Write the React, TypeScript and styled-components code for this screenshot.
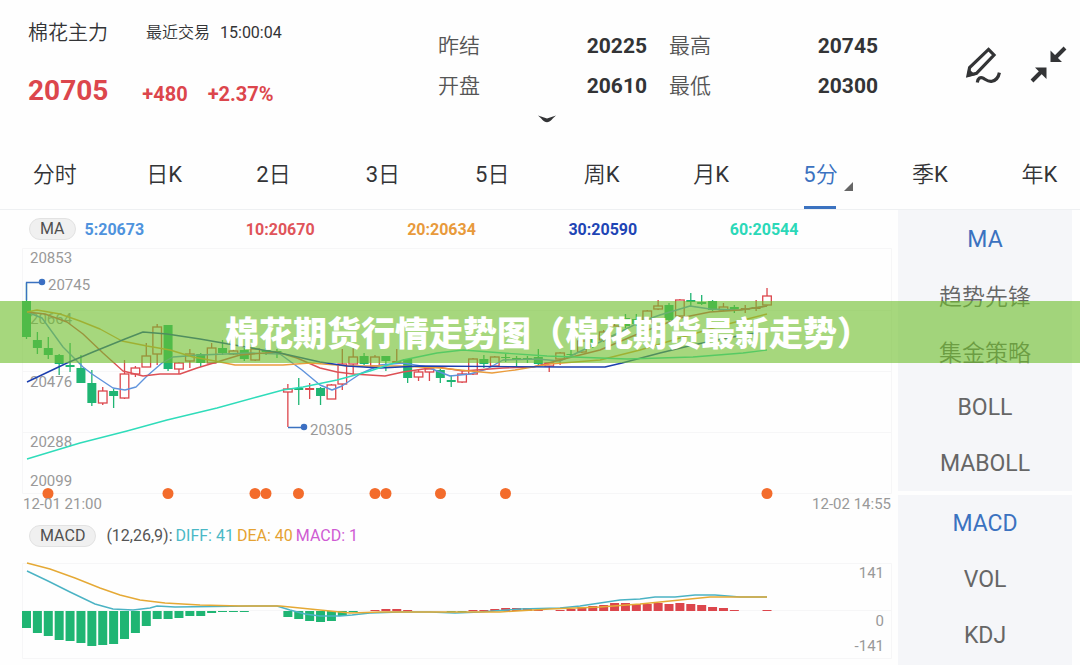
import React from "react";
import styled, { createGlobalStyle } from "styled-components";

const UP = "#dc464c";
const DOWN = "#1fb573";
const INK = "#333436";
const MUTED = "#999999";
const ACCENT = "#3b72c0";

const GlobalStyle = createGlobalStyle`
  *, *::before, *::after { box-sizing: border-box; }
  body {
    margin: 0;
    background: #fefefe;
    color: ${INK};
    font-family: Roboto, "Noto Sans CJK SC DemiLight", "Noto Sans CJK SC", sans-serif;
    overflow-x: hidden;
  }
  button {
    font: inherit;
    color: inherit;
    background: none;
    border: 0;
    padding: 0;
    cursor: pointer;
  }
`;

const Page = styled.div`
  position: relative;
  overflow: hidden;
`;

const Header = styled.header`
  display: grid;
  grid-template-columns: 438fr 440fr 202fr;
  height: 106px;
`;

const Quote = styled.section`
  display: flex;
  flex-direction: column;
  gap: 22px;
  padding: 18px 0 0 28px;
`;

const QuoteLine = styled.div<{ $gap: number; $height: number }>`
  display: flex;
  align-items: center;
  gap: ${(p) => p.$gap}px;
  line-height: ${(p) => p.$height}px;
  white-space: nowrap;
`;

const Name = styled.h1`
  margin: 0 28px 0 0;
  font-size: 20px;
  font-weight: 400;
`;

const Meta = styled.span`
  font-size: 16px;
`;

const Price = styled.strong`
  margin-right: 14px;
  font-size: 28px;
  font-weight: 700;
  color: ${UP};
`;

const Change = styled.strong`
  padding-top: 6px;
  font-size: 20px;
  font-weight: 700;
  color: ${UP};
`;

const Stats = styled.dl`
  display: grid;
  grid-template-columns: 1fr 1fr;
  grid-auto-rows: 40px;
  column-gap: 22px;
  margin: 0;
  padding-top: 26px;
`;

const Stat = styled.div`
  display: flex;
  justify-content: space-between;
  align-items: baseline;
  font-size: 21px;
  line-height: 40px;

  dt { font-weight: 300; color: #555; }
  dd { margin: 0; font-weight: 700; }
`;

const Tools = styled.div`
  display: flex;
  justify-content: flex-end;
  align-items: flex-start;
  gap: 28px;
  padding: 45px 13px 0 0;

  svg { display: block; }
`;

const ExpandRow = styled.div`
  display: flex;
  justify-content: center;
  height: 33px;
  padding: 9px 0 0 14px;

  svg { display: block; }
`;

const ExpandButton = styled.button`
  align-self: flex-start;
`;

const Tabs = styled.nav`
  display: grid;
  grid-template-columns: repeat(10, 1fr);
  height: 71px;
  margin-right: -14px;
  border-bottom: 1px solid #eef0f2;
`;

const Tab = styled.button<{ $active?: boolean }>`
  position: relative;
  padding-bottom: 4px;
  font-size: 22px;
  color: ${(p) => (p.$active ? ACCENT : INK)};

  &::after {
    content: "";
    display: ${(p) => (p.$active ? "block" : "none")};
    position: absolute;
    left: 50%;
    bottom: 0;
    width: 32px;
    height: 3px;
    margin-left: -16px;
    background: ${ACCENT};
  }
`;

const Corner = styled.svg`
  position: absolute;
  right: 22px;
  bottom: 18px;
`;

const Main = styled.main`
  display: grid;
  grid-template-columns: 1fr 174px;
  padding-right: 8px;
`;

const Charts = styled.section`
  min-width: 0;
`;

const Legend = styled.div<{ $height: number }>`
  display: flex;
  align-items: center;
  height: ${(p) => p.$height}px;
  padding-left: 29px;
  font-size: 16px;
  white-space: nowrap;
`;

const Pill = styled.button`
  height: 22px;
  padding: 0 10px;
  border: 1px solid #e2e2e2;
  border-radius: 11px;
  background: #f0f0f0;
  color: #505050;
  font-size: 16px;
  line-height: 20px;
`;

const Averages = styled.div`
  display: grid;
  grid-template-columns: repeat(5, 1fr);
  flex: 1;
  padding: 0 7px 0 9px;
`;

const Average = styled.strong<{ $color: string }>`
  color: ${(p) => p.$color};
  font-weight: 700;
`;

const Readings = styled.div`
  display: flex;
  gap: 3px;
  padding-left: 10px;
`;

const Reading = styled.span<{ $color: string }>`
  color: ${(p) => p.$color};
`;

const Plot = styled.svg`
  display: block;
  width: 100%;
  height: auto;
`;

const AxisText = styled.text`
  fill: ${MUTED};
  font-size: 15px;
`;

const Sidebar = styled.aside`
  display: flex;
  flex-direction: column;
  gap: 4px;
`;

const Panel = styled.div`
  display: flex;
  flex-direction: column;
  padding-top: 1px;
  background: #f5f6f9;

  &:last-child { flex: 1; padding-top: 0; }
`;

const Indicator = styled.button<{ $active?: boolean }>`
  height: 56px;
  font-size: 23px;
  color: ${(p) => (p.$active ? ACCENT : "#666")};
`;

const Banner = styled.div`
  position: absolute;
  top: 301px;
  left: 0;
  right: 0;
  display: flex;
  justify-content: center;
  align-items: center;
  height: 62px;
  padding-left: 16px;
  background: rgba(111, 190, 45, 0.62);
  color: #fff;
  font-family: "Noto Sans CJK SC", sans-serif;
  font-size: 34px;
  font-weight: 900;
  line-height: 62px;
  white-space: nowrap;
`;

/* Horizontal centre of the bar with the given index. */
const barX = (i: number) => 26.5 + i * 10.89;

type Candle = [up: 0 | 1, high: number, open: number, close: number, low: number];

const candles: Candle[] = [
  [0, 283, 301, 337, 339], [0, 332, 340, 348, 354], [0, 337, 348, 355, 359],
  [0, 354, 355, 364, 375], [0, 343, 365, 367, 372], [0, 355, 368, 383, 383],
  [0, 370, 383, 403, 406], [1, 387, 391, 403, 405], [0, 389, 391, 396, 408],
  [1, 360, 374, 398, 399], [1, 366, 368, 374, 377], [1, 343, 356, 367, 367],
  [1, 324, 327, 354, 365], [0, 325, 325, 369, 371], [1, 362, 363, 369, 374],
  [1, 349, 354, 361, 368], [0, 353, 354, 363, 367], [1, 343, 348, 363, 363],
  [0, 340, 348, 353, 355], [1, 349, 351, 354, 355], [0, 348, 350, 359, 361],
  [1, 348, 349, 360, 361], [0, 348, 350, 352, 355], [0, 349, 351, 352, 358],
  [1, 384, 389, 392, 427], [0, 378, 388, 390, 405], [1, 383, 388, 390, 399],
  [0, 387, 388, 396, 405], [1, 384, 385, 399, 399], [1, 349, 364, 384, 390],
  [1, 348, 357, 364, 374], [0, 353, 356, 364, 365], [1, 355, 357, 366, 366],
  [0, 356, 356, 361, 371], [1, 349, 361, 363, 364], [0, 359, 359, 378, 383],
  [1, 370, 372, 377, 381], [1, 367, 369, 372, 381], [0, 369, 370, 378, 383],
  [0, 375, 380, 382, 387], [1, 371, 374, 382, 383], [1, 358, 359, 374, 375],
  [0, 355, 359, 364, 368], [1, 356, 357, 366, 366], [0, 354, 357, 358, 362],
  [0, 356, 358, 360, 367], [0, 356, 358, 359, 363], [0, 349, 357, 364, 365],
  [1, 362, 363, 366, 372], [1, 352, 353, 359, 365], [0, 350, 354, 355, 358],
  [1, 338, 341, 352, 353], [0, 336, 338, 346, 348], [1, 330, 332, 340, 342],
  [1, 322, 326, 336, 338], [0, 314, 318, 326, 328], [0, 314, 319, 324, 326],
  [1, 310, 311, 322, 323], [1, 300, 306, 309, 310], [0, 303, 305, 320, 321],
  [1, 299, 300, 316, 317], [0, 293, 300, 302, 307], [0, 295, 302, 304, 305],
  [0, 300, 301, 310, 311], [1, 303, 307, 310, 311], [0, 305, 307, 309, 313],
  [1, 305, 308, 310, 313], [1, 300, 307, 309, 311], [1, 288, 296, 305, 306],
];

const averageLines: { color: string; points: string }[] = [
  {
    color: "#5f93dc",
    points:
      "27,312 42,318 63,347 83,367 92,374 113,388 125,390 136,387 147,376 162,363 173,357 200,355 250,353 280,354 302,370 320,385 332,390 342,386 360,374 380,365 403,363 427,367 450,376 470,374 487,369 503,360 537,359 560,361 600,342 640,322 660,315 690,306 710,309 740,310 767,306",
  },
  {
    color: "#dd5055",
    points:
      "27,312 45,314 67,322 83,334 103,353 123,371 143,376 160,374 180,374 197,368 217,362 240,355 277,352 297,358 320,368 337,372 353,374 385,376 403,372 437,367 463,371 503,368 533,367 560,360 600,350 640,333 680,318 710,312 740,310 767,306",
  },
  {
    color: "#ea9c3c",
    points:
      "27,312 37,310 60,314 80,321 100,329 122,341 147,346 170,350 193,357 215,361 235,365 283,365 310,363 350,366 400,366 440,368 470,371 492,373 515,370 550,364 600,360 640,350 680,338 720,326 767,314",
  },
  {
    color: "#1c3fae",
    points:
      "27,382 67,363 93,352 125,339 143,332 167,334 200,339 240,346 280,353 320,362 347,366 380,368 420,366 560,367 605,367 622,363 660,353 693,345 727,338 767,331",
  },
  {
    color: "#2fdcba",
    points:
      "27,459 80,443 127,431 167,420 217,408 257,397 283,390 303,387 337,380 370,371 403,360 437,353 463,350 503,353 547,356 627,359 693,357 743,353 767,350",
  },
];

const priceLabels: [string, number][] = [
  ["20853", 263], ["20664", 324], ["20476", 387], ["20288", 447], ["20099", 486],
];

const eventMarks = [48, 168, 255, 266, 298.5, 375, 386, 440.5, 505.5, 767];

const ZERO = 611;
/* Signed bar lengths: positive bars rise above the zero line. */
const histogram = [
  -17, -22, -25, -29, -30, -32, -35, -34, -33, -28, -22, -15, -8, -8, -7, -5, -5,
  -2, -1, -1, -1, 0, 0, 0, -6, -8, -10, -11, -10, -5, -1, 0, 1, 2, 2, 1, 0, 0, 0,
  -1, -1, 1, 1, 2, 3, 3, 3, 1, 0, 1, 2, 4, 5, 6, 8, 8, 7, 7, 8, 7, 8, 7, 6, 4, 3,
  1, 0, 0, 1,
];

const diffLine =
  "27,571 48,581 70,592 95,604 113,609 133,610 150,608 157,606 175,607 250,606 277,606 290,610 305,614 320,616 340,616 352,615 370,613 400,612 430,612 455,613 480,612 520,609 560,608 580,606 600,603 620,600 640,599 655,597 675,597 695,595 715,595 740,597 767,597";
const deaLine =
  "27,563 50,569 75,578 100,588 120,595 140,600 165,603 200,605 240,606 280,606 300,608 330,611 350,613 380,612 420,612 455,612 500,612 550,609 600,607 640,604 680,600 710,597 767,597";

function CandleMark({ candle, x }: { candle: Candle; x: number }) {
  const [up, high, top, bottom, low] = candle;
  const color = up ? UP : DOWN;
  const thin = bottom - top < 3;
  return (
    <g stroke={color} strokeWidth={1.3} fill={up && !thin ? "none" : color}>
      <path d={`M${x} ${high}V${top}M${x} ${bottom}V${low}`} />
      {up && !thin ? (
        <rect x={x - 4.3} y={top} width={8.6} height={bottom - top} />
      ) : (
        <rect x={x - 4.5} y={top} width={9} height={bottom - top} stroke="none" />
      )}
    </g>
  );
}

function PriceChart() {
  return (
    <Plot viewBox="0 248 898 266" role="img" aria-label="5分钟K线">
      <path
        d="M22.5 248.5H891.5V493.5H22.5ZM22.5 310.5H891.5M22.5 371.5H891.5M22.5 432.5H891.5"
        fill="none"
        stroke="#f6f6f7"
      />
      {priceLabels.map(([label, y]) => (
        <AxisText key={label} x={30} y={y}>{label}</AxisText>
      ))}
      {candles.map((c, i) => (
        <CandleMark key={i} candle={c} x={barX(i)} />
      ))}
      {averageLines.map((l) => (
        <polyline
          key={l.color}
          points={l.points}
          fill="none"
          stroke={l.color}
          strokeWidth={1.4}
          strokeLinejoin="round"
        />
      ))}
      <g stroke={ACCENT} strokeWidth={1.3} fill="#3d6cc4">
        <path d="M26.5 300V282.5H42M288 427.5H304" fill="none" />
        <circle cx={42} cy={282} r={2.6} />
        <circle cx={304} cy={427} r={2.6} />
      </g>
      <AxisText x={48} y={290}>20745</AxisText>
      <AxisText x={310} y={435}>20305</AxisText>
      {eventMarks.map((x) => (
        <circle key={x} cx={x} cy={493.5} r={5.5} fill="#f36c2c" />
      ))}
      <AxisText x={23} y={509}>12-01 21:00</AxisText>
      <AxisText x={891} y={509} textAnchor="end">12-02 14:55</AxisText>
    </Plot>
  );
}

function MacdChart() {
  return (
    <Plot viewBox="0 557 898 108" role="img" aria-label="MACD">
      <path
        d="M22.5 563.5H891.5V658.5H22.5ZM22.5 610.5H891.5"
        fill="none"
        stroke="#f6f6f7"
      />
      {histogram.map((v, i) =>
        v === 0 ? null : (
          <rect
            key={i}
            x={barX(i) - 4.5}
            y={v > 0 ? ZERO - v : ZERO}
            width={9}
            height={Math.abs(v)}
            fill={v > 0 ? UP : DOWN}
          />
        )
      )}
      <polyline points={diffLine} fill="none" stroke="#4bb3c4" strokeWidth={1.4} />
      <polyline points={deaLine} fill="none" stroke="#e5a935" strokeWidth={1.4} />
      <AxisText x={884} y={578} textAnchor="end">141</AxisText>
      <AxisText x={884} y={626} textAnchor="end">0</AxisText>
      <AxisText x={884} y={651} textAnchor="end">-141</AxisText>
    </Plot>
  );
}

function PencilIcon() {
  return (
    <svg width="37" height="40" viewBox="0 0 37 40" fill="none" stroke={INK} strokeWidth="3.2">
      <path d="M23.5 4.4 29 10 11.5 28.4 3 30.6 4.6 22.6Z" strokeLinejoin="miter" />
      <path d="M3 30.6 4 25.5 8.4 29.4Z" fill={INK} strokeWidth="2" />
      <path d="M12.3 37.5C12.8 33.2 15.4 31.6 18.2 33.2C21.3 35 23.6 37.2 27 36.3C31 35.3 33.5 32.4 34.4 27.6" />
    </svg>
  );
}

function ShrinkIcon() {
  return (
    <svg width="37" height="38" viewBox="0 0 37 38" fill={INK} stroke={INK}>
      <path d="M35 3 26 12M2 36 11 27" strokeWidth="4" fill="none" />
      <path d="M20.5 5.5V17H32ZM5 22.5H16.5V34Z" stroke="none" />
    </svg>
  );
}

const tabs = ["分时", "日K", "2日", "3日", "5日", "周K", "月K", "5分", "季K", "年K"];
const stats = [["昨结", "20225"], ["最高", "20745"], ["开盘", "20610"], ["最低", "20300"]];
const averages = [
  ["5:20673", "#4f93dd"],
  ["10:20670", "#e0545a"],
  ["20:20634", "#e89a3b"],
  ["30:20590", "#1d45b5"],
  ["60:20544", "#2bd8b8"],
];
const overlays = ["MA", "趋势先锋", "集金策略", "BOLL", "MABOLL"];
const oscillators = ["MACD", "VOL", "KDJ"];

export default function App() {
  return (
    <Page>
      <GlobalStyle />
      <Header>
        <Quote>
          <QuoteLine $gap={10} $height={30}>
            <Name>棉花主力</Name>
            <Meta>最近交易</Meta>
            <Meta>15:00:04</Meta>
          </QuoteLine>
          <QuoteLine $gap={20} $height={36}>
            <Price>20705</Price>
            <Change>+480</Change>
            <Change>+2.37%</Change>
          </QuoteLine>
        </Quote>
        <Stats>
          {stats.map(([label, value]) => (
            <Stat key={label}>
              <dt>{label}</dt>
              <dd>{value}</dd>
            </Stat>
          ))}
        </Stats>
        <Tools>
          <button aria-label="画线"><PencilIcon /></button>
          <button aria-label="退出全屏"><ShrinkIcon /></button>
        </Tools>
      </Header>
      <ExpandRow>
        <ExpandButton aria-label="展开">
          <svg width="18" height="8" viewBox="0 0 18 8" fill={INK}>
            <path d="M0 0.5 9 3.4 18 0.5C15 2.6 12.5 7.2 9 7.2C5.5 7.2 3 2.6 0 0.5Z" />
          </svg>
        </ExpandButton>
      </ExpandRow>
      <Tabs>
        {tabs.map((t) => (
          <Tab key={t} $active={t === "5分"}>
            {t}
            {t === "5分" && (
              <Corner width="9" height="9" viewBox="0 0 9 9" fill="#666">
                <path d="M9 0V9H0Z" />
              </Corner>
            )}
          </Tab>
        ))}
      </Tabs>
      <Main>
        <Charts>
          <Legend $height={38}>
            <Pill>MA</Pill>
            <Averages>
              {averages.map(([label, color]) => (
                <Average key={label} $color={color}>{label}</Average>
              ))}
            </Averages>
          </Legend>
          <PriceChart />
          <Legend $height={43}>
            <Pill>MACD</Pill>
            <Readings>
              <Reading $color="#555">(12,26,9):</Reading>
              <Reading $color="#4bb8c6">DIFF: 41</Reading>
              <Reading $color="#e5a232">DEA: 40</Reading>
              <Reading $color="#cf5bd3">MACD: 1</Reading>
            </Readings>
          </Legend>
          <MacdChart />
        </Charts>
        <Sidebar>
          <Panel>
            {overlays.map((o) => (
              <Indicator key={o} $active={o === "MA"}>{o}</Indicator>
            ))}
          </Panel>
          <Panel>
            {oscillators.map((o) => (
              <Indicator key={o} $active={o === "MACD"}>{o}</Indicator>
            ))}
          </Panel>
        </Sidebar>
      </Main>
      <Banner>棉花期货行情走势图（棉花期货最新走势）</Banner>
    </Page>
  );
}
